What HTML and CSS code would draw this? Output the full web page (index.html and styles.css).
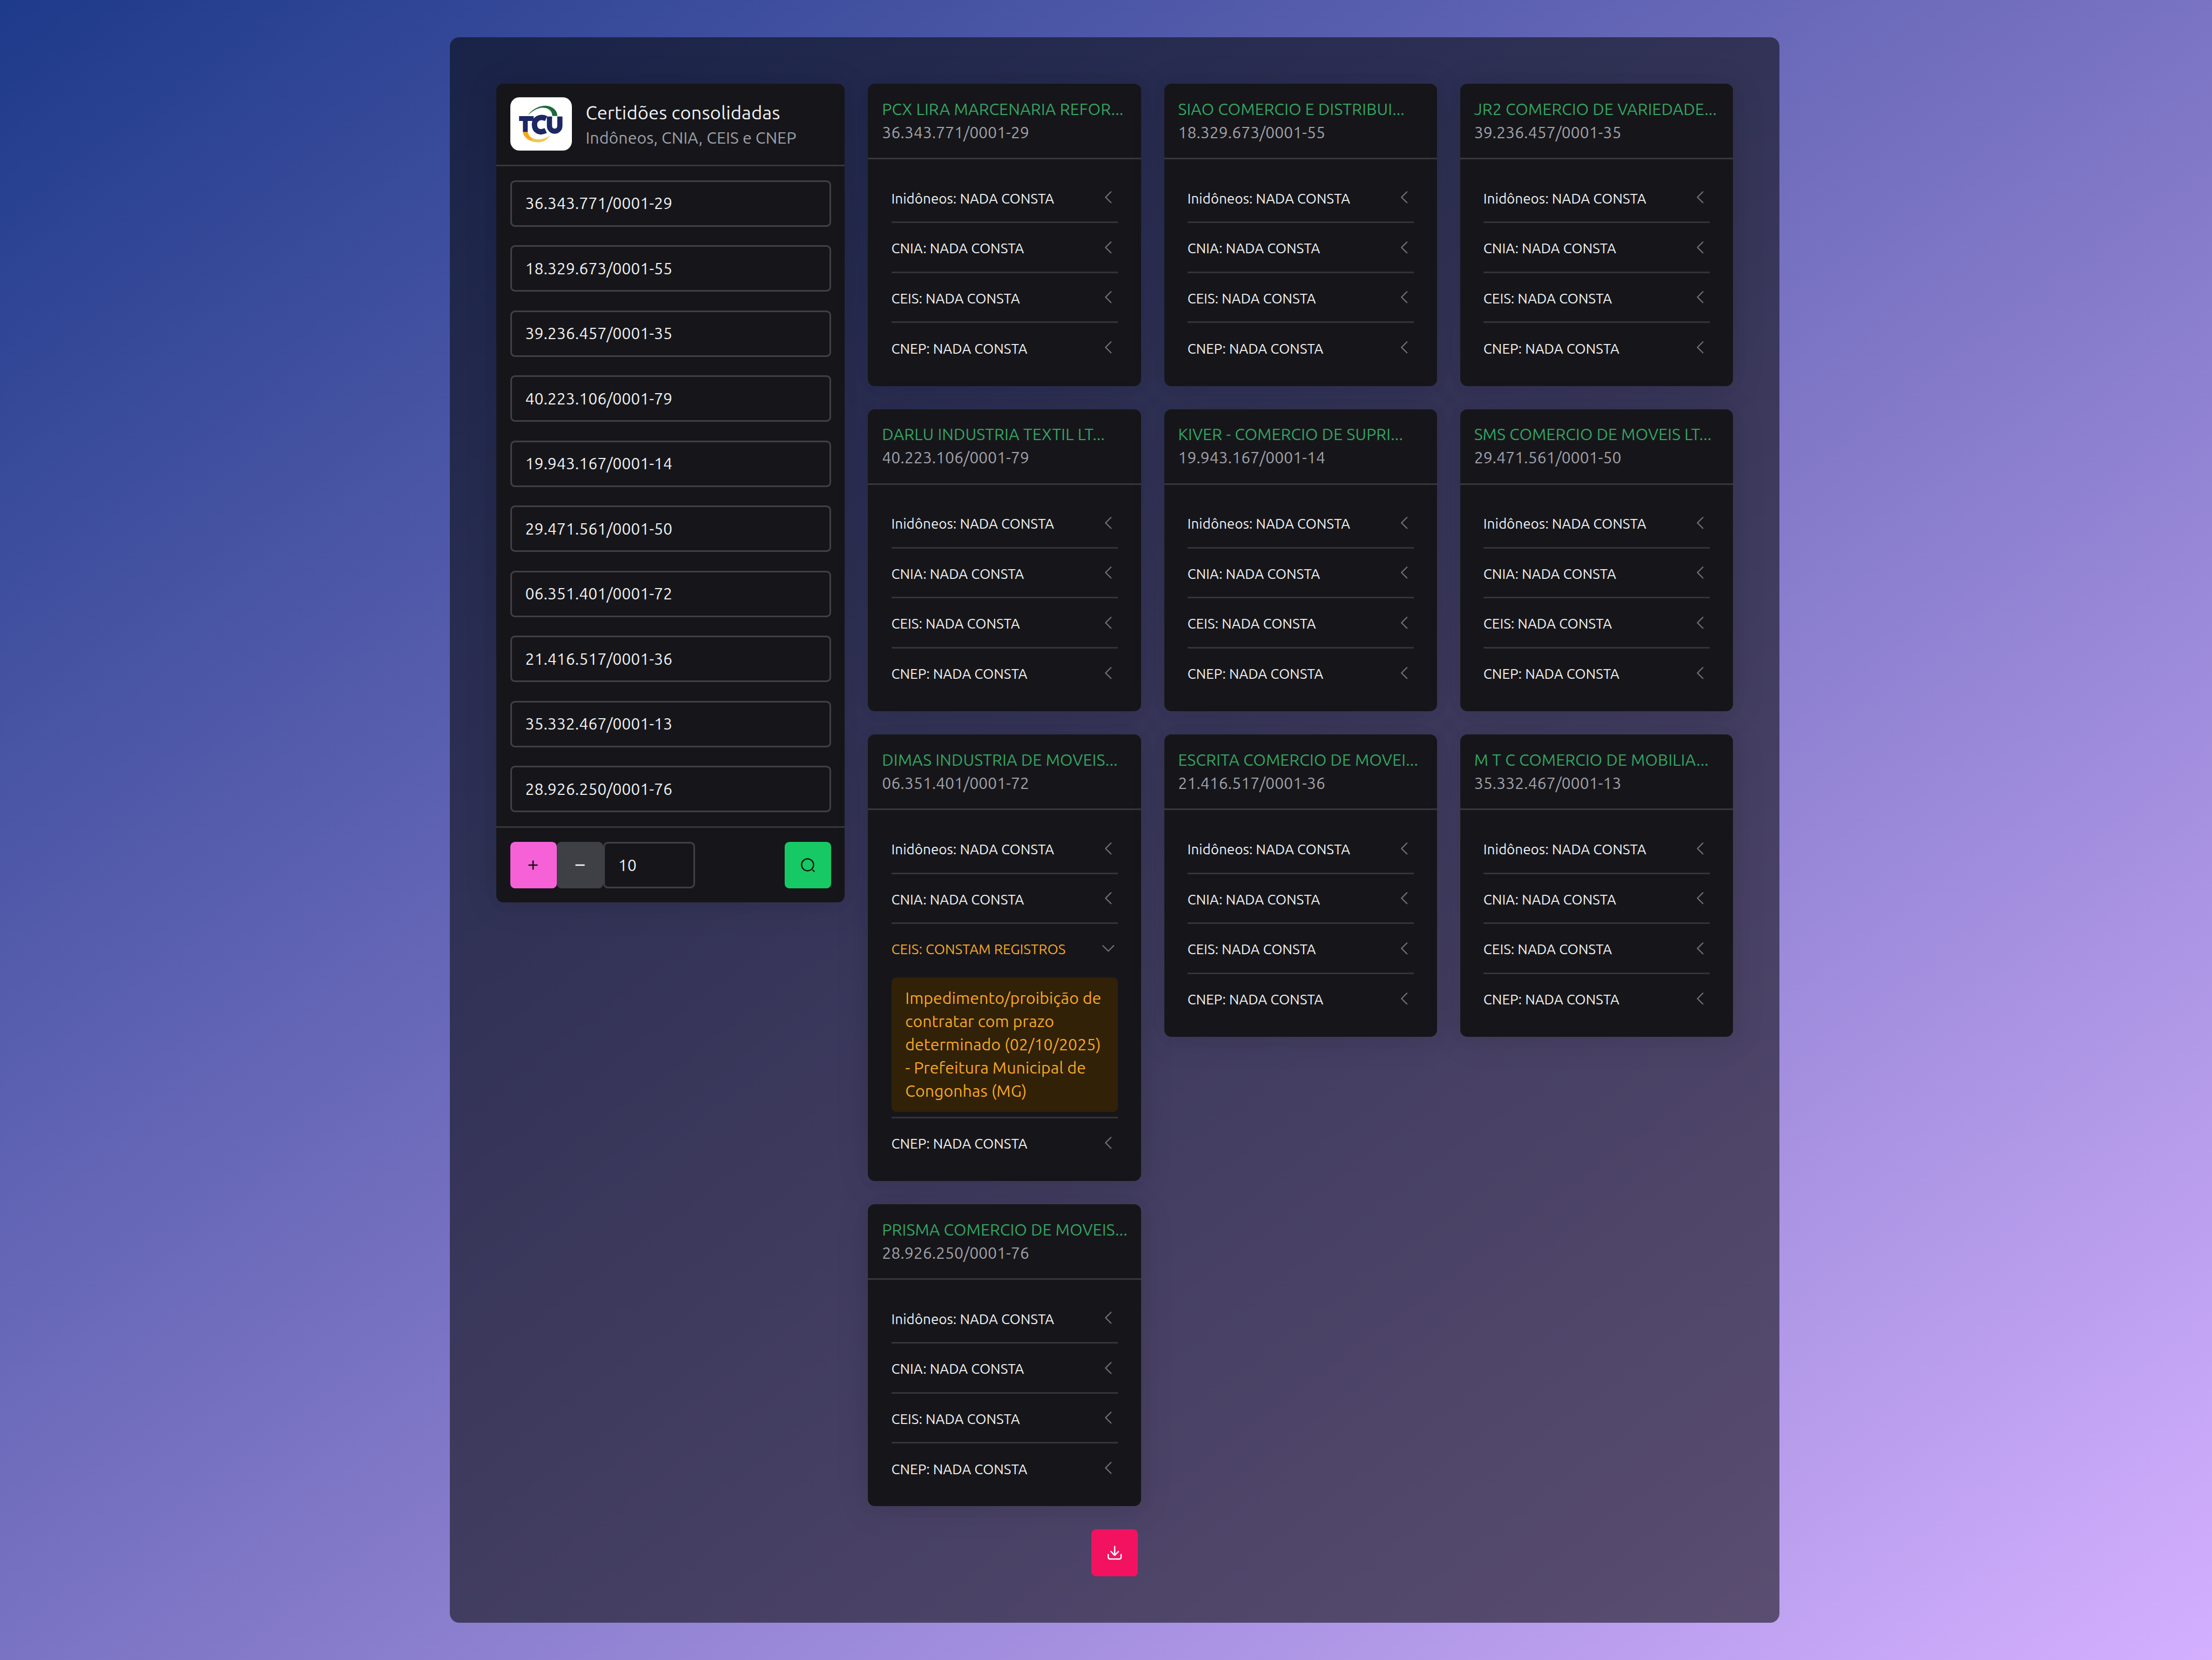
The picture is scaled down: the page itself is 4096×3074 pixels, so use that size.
FILE: index.html
```html
<!DOCTYPE html>
<html lang="pt-BR">
<head>
<meta charset="utf-8">
<title>Certidões consolidadas</title>
<link rel="stylesheet" href="styles.css">
</head>
<body>
<svg width="0" height="0" class="defs">
  <symbol id="chev" viewBox="0 0 24 24"><path d="M15.5 19l-7-7 7-7" fill="none" stroke="currentColor" stroke-width="1.5" stroke-linecap="round" stroke-linejoin="round"/></symbol>
</svg>
<main class="panel">
  <div class="columns">
    <section class="card form">
      <header class="form-head">
        <svg class="logo" viewBox="0 0 148 128">
          <rect width="148" height="128" fill="#fff"/>
          <path d="M42 43C56 24 78 18 91 21C106 25 113 34 113 45H101C100 33 93 26 80 25C66 24 53 33 42 43Z" fill="#1f6a3c"/>
          <path d="M30 83H42C44 95 55 102 70 101C80 100 89 97 96 91C88 104 76 109 64 108C45 107 32 97 30 83Z" fill="#eec850"/>
          <path d="M30 83H42C44 92 48 96 54 101L48 103C38 99 31 91 30 83Z" fill="#f9a51c"/>
          <g fill="none" stroke="#1c2763" stroke-width="11.5">
            <path d="M21 51H56M36 48V83"/>
            <path d="M86 51C70 44 58 53 58 65C58 81 70 87 85 80" stroke-width="13"/>
            <path d="M94 46V68C94 86 119 86 119 68V46" stroke-width="12.500"/>
          </g>
        </svg>
        <div class="form-titles">
          <h1>Certidões consolidadas</h1>
          <p>Indôneos, CNIA, CEIS e CNEP</p>
        </div>
      </header>
      <div class="fields">
        <div class="input">36.343.771/0001-29</div>
        <div class="input">18.329.673/0001-55</div>
        <div class="input">39.236.457/0001-35</div>
        <div class="input">40.223.106/0001-79</div>
        <div class="input">19.943.167/0001-14</div>
        <div class="input">29.471.561/0001-50</div>
        <div class="input">06.351.401/0001-72</div>
        <div class="input">21.416.517/0001-36</div>
        <div class="input">35.332.467/0001-13</div>
        <div class="input">28.926.250/0001-76</div>
      </div>
      <footer class="form-foot">
        <button class="btn pink"><svg viewBox="0 0 24 24"><path d="M6 12h12M12 18V6"/></svg></button>
        <button class="btn gray"><svg viewBox="0 0 24 24"><path d="M6 12h12"/></svg></button>
        <div class="input count">10</div>
        <button class="btn green"><svg viewBox="0 0 24 24"><path d="M11.5 21a9.5 9.5 0 1 0 0-19 9.5 9.5 0 0 0 0 19ZM22 22l-2-2"/></svg></button>
      </footer>
    </section>
    <div class="results">
      <article class="card"><header><h2>PCX LIRA MARCENARIA REFOR...</h2><p>36.343.771/0001-29</p></header>
        <ul><li>Inidôneos: NADA CONSTA<svg><use href="#chev"/></svg></li><li>CNIA: NADA CONSTA<svg><use href="#chev"/></svg></li><li>CEIS: NADA CONSTA<svg><use href="#chev"/></svg></li><li>CNEP: NADA CONSTA<svg><use href="#chev"/></svg></li></ul></article>
      <article class="card"><header><h2>SIAO COMERCIO E DISTRIBUI...</h2><p>18.329.673/0001-55</p></header>
        <ul><li>Inidôneos: NADA CONSTA<svg><use href="#chev"/></svg></li><li>CNIA: NADA CONSTA<svg><use href="#chev"/></svg></li><li>CEIS: NADA CONSTA<svg><use href="#chev"/></svg></li><li>CNEP: NADA CONSTA<svg><use href="#chev"/></svg></li></ul></article>
      <article class="card"><header><h2>JR2 COMERCIO DE VARIEDADE...</h2><p>39.236.457/0001-35</p></header>
        <ul><li>Inidôneos: NADA CONSTA<svg><use href="#chev"/></svg></li><li>CNIA: NADA CONSTA<svg><use href="#chev"/></svg></li><li>CEIS: NADA CONSTA<svg><use href="#chev"/></svg></li><li>CNEP: NADA CONSTA<svg><use href="#chev"/></svg></li></ul></article>
      <article class="card"><header><h2>DARLU INDUSTRIA TEXTIL LT...</h2><p>40.223.106/0001-79</p></header>
        <ul><li>Inidôneos: NADA CONSTA<svg><use href="#chev"/></svg></li><li>CNIA: NADA CONSTA<svg><use href="#chev"/></svg></li><li>CEIS: NADA CONSTA<svg><use href="#chev"/></svg></li><li>CNEP: NADA CONSTA<svg><use href="#chev"/></svg></li></ul></article>
      <article class="card"><header><h2>KIVER - COMERCIO DE SUPRI...</h2><p>19.943.167/0001-14</p></header>
        <ul><li>Inidôneos: NADA CONSTA<svg><use href="#chev"/></svg></li><li>CNIA: NADA CONSTA<svg><use href="#chev"/></svg></li><li>CEIS: NADA CONSTA<svg><use href="#chev"/></svg></li><li>CNEP: NADA CONSTA<svg><use href="#chev"/></svg></li></ul></article>
      <article class="card"><header><h2>SMS COMERCIO DE MOVEIS LT...</h2><p>29.471.561/0001-50</p></header>
        <ul><li>Inidôneos: NADA CONSTA<svg><use href="#chev"/></svg></li><li>CNIA: NADA CONSTA<svg><use href="#chev"/></svg></li><li>CEIS: NADA CONSTA<svg><use href="#chev"/></svg></li><li>CNEP: NADA CONSTA<svg><use href="#chev"/></svg></li></ul></article>
      <article class="card"><header><h2>DIMAS INDUSTRIA DE MOVEIS...</h2><p>06.351.401/0001-72</p></header>
        <ul><li>Inidôneos: NADA CONSTA<svg><use href="#chev"/></svg></li><li>CNIA: NADA CONSTA<svg><use href="#chev"/></svg></li><li class="open">CEIS: CONSTAM REGISTROS<svg><use href="#chev"/></svg></li><li class="detail"><div class="alert">Impedimento/proibição de<br>contratar com prazo<br>determinado (02/10/2025)<br>- Prefeitura Municipal de<br>Congonhas (MG)</div></li><li>CNEP: NADA CONSTA<svg><use href="#chev"/></svg></li></ul></article>
      <article class="card"><header><h2>ESCRITA COMERCIO DE MOVEI...</h2><p>21.416.517/0001-36</p></header>
        <ul><li>Inidôneos: NADA CONSTA<svg><use href="#chev"/></svg></li><li>CNIA: NADA CONSTA<svg><use href="#chev"/></svg></li><li>CEIS: NADA CONSTA<svg><use href="#chev"/></svg></li><li>CNEP: NADA CONSTA<svg><use href="#chev"/></svg></li></ul></article>
      <article class="card"><header><h2>M T C COMERCIO DE MOBILIA...</h2><p>35.332.467/0001-13</p></header>
        <ul><li>Inidôneos: NADA CONSTA<svg><use href="#chev"/></svg></li><li>CNIA: NADA CONSTA<svg><use href="#chev"/></svg></li><li>CEIS: NADA CONSTA<svg><use href="#chev"/></svg></li><li>CNEP: NADA CONSTA<svg><use href="#chev"/></svg></li></ul></article>
      <article class="card"><header><h2>PRISMA COMERCIO DE MOVEIS...</h2><p>28.926.250/0001-76</p></header>
        <ul><li>Inidôneos: NADA CONSTA<svg><use href="#chev"/></svg></li><li>CNIA: NADA CONSTA<svg><use href="#chev"/></svg></li><li>CEIS: NADA CONSTA<svg><use href="#chev"/></svg></li><li>CNEP: NADA CONSTA<svg><use href="#chev"/></svg></li></ul></article>
    </div>
  </div>
  <button class="btn red"><svg viewBox="0 0 24 24"><path d="M12 3v12.500M6.500 10.500l5.500 5.500 5.500-5.500M2.500 15v4a2.500 2.500 0 0 0 2.500 2.500h14a2.500 2.500 0 0 0 2.500-2.500v-4"/></svg></button>
</main>
</body>
</html>
```
FILE: styles.css
```css
/* 1rem is ten layout units */
html { font-size: 21.525px; }
* { box-sizing: border-box; margin: 0; padding: 0; }
body {
  width: 4096px;
  height: 3074px;
  overflow: hidden;
  padding: 3.2rem 0 0 38.68rem;
  background: linear-gradient(to bottom right, #1e3a8a, #7a73c3 50%, #d4b0ff);
  color: #f1f2f3;
  font-family: Ubuntu, "Noto Sans", sans-serif;
  font-size: 1.4rem;
  line-height: 2rem;
}
.defs { position: absolute; }
.panel {
  width: 114.4rem;
  padding: 4rem;
  border-radius: .8rem;
  background: rgba(3, 6, 3, .54);
  display: flex;
  flex-direction: column;
  align-items: center;
  gap: 2rem;
}
.columns { display: flex; gap: 2rem; align-items: flex-start; width: 100%; }
.results { flex: 1; display: grid; grid-template-columns: repeat(3, minmax(0, 1fr)); gap: 2rem; align-items: start; }
.card {
  background: #16161a;
  border-radius: .6rem;
  overflow: hidden;
  white-space: nowrap;
  box-shadow: 0 0 1.5rem rgba(0, 0, 0, .04), 0 .2rem 3rem rgba(0, 0, 0, .1);
}
.card header { padding: 1.2rem; border-bottom: .14rem solid #37373a; }
.card > header:not(.form-head) { height: 6.5rem; }
h2 { font-size: 1.4rem; font-weight: 400; line-height: 2rem; color: #34a562; letter-spacing: .009rem; }
.card p { color: #a1a1aa; }
.form-titles p { letter-spacing: .008rem; }
ul { list-style: none; padding: 1.2rem 2rem; }
li {
  height: 4.3rem;
  padding-top: .16rem;
  border-bottom: .14rem solid #343438;
  display: flex;
  align-items: center;
  justify-content: space-between;
  font-size: 1.2rem;
  letter-spacing: .006rem;
}
li:last-child { height: 4.2rem; border-bottom: 0; }
li svg { width: 1.6rem; height: 1.6rem; margin-bottom: .16rem; color: #71717a; }
li.open { height: 4.2rem; border-bottom: 0; color: #f9a825; }
li.open svg { transform: rotate(-90deg); }
li.detail { height: 12.5rem; padding: .4rem 0; }
.alert {
  width: 100%;
  padding: .8rem 1.2rem;
  border-radius: .4rem;
  background: #312107;
  color: #f9a825;
  font-size: 1.4rem;
  line-height: 2rem;
}
.form { width: 30rem; flex: none; }
.form-head { display: flex; gap: 1.2rem; align-items: center; height: 7.1rem; }
.logo { width: 5.3rem; height: 4.6rem; border-radius: .8rem; }
h1 { font-size: 1.6rem; line-height: 2.4rem; font-weight: 400; letter-spacing: .009rem; }
.fields { padding: 1.2rem; display: flex; flex-direction: column; gap: 1.6rem; }
.input {
  height: 4rem;
  border: .14rem solid #3f3f46;
  border-radius: .4rem;
  padding: 0 1.16rem;
  display: flex;
  align-items: center;
}
.form-foot { display: flex; padding: 1.2rem; border-top: .14rem solid #37373a; }
.count { width: 7.9rem; }
.btn { width: 4rem; height: 4rem; border: 0; border-radius: .4rem; display: flex; align-items: center; justify-content: center; flex: none; }
.btn svg { width: 1.4rem; height: 1.4rem; fill: none; stroke: #fff; stroke-width: 2; stroke-linecap: round; stroke-linejoin: round; }
.pink { background: #f761d8; }
.pink svg, .green svg { stroke: #111; }
.green svg { width: 1.3rem; height: 1.3rem; }
.gray { background: #3f3f46; }
.green { background: #17c964; margin-left: auto; }
.red { background: #f31260; }
```
